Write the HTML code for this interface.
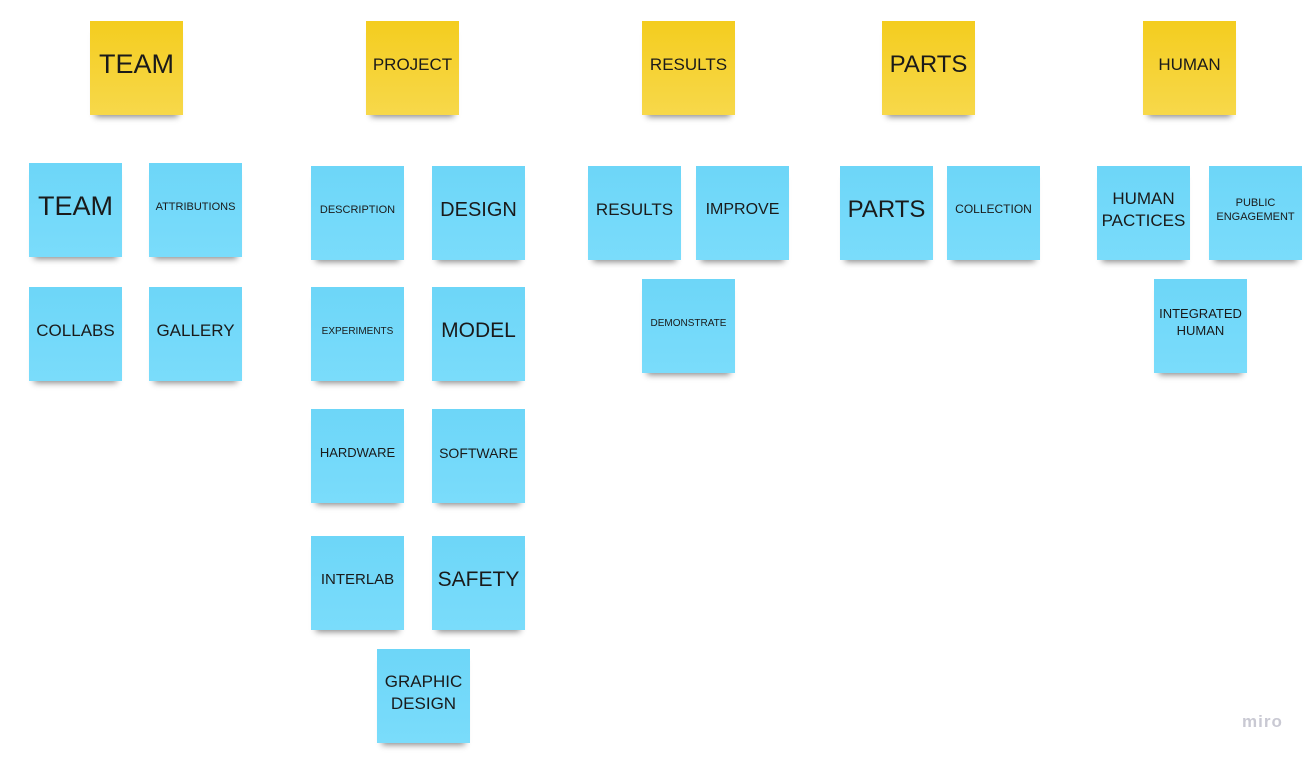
<!DOCTYPE html>
<html><head><meta charset="utf-8"><style>
html,body{margin:0;padding:0;width:1314px;height:760px;background:#fff;overflow:hidden;position:relative;font-family:"Liberation Sans",sans-serif;}
.n{position:absolute;width:93px;height:94px;display:flex;align-items:center;justify-content:center;text-align:center;color:#1a1a1a;line-height:1.3;box-sizing:border-box;padding:0 2px 6px 2px;box-shadow:0 7px 6px -5px rgba(0,0,0,0.45);}
.y{background:linear-gradient(180deg,#f4cd1f,#f7d84a);}
.b{background:linear-gradient(180deg,#6dd6f8,#7adcfb);}
.L{font-size:27px;}
.M{font-size:17px;}
.S{font-size:11px;}
.miro{position:absolute;left:1242px;top:712px;font-size:17px;color:#c9c9d3;letter-spacing:1px;font-weight:bold;}
</style></head><body>
<div class="n y L" style="left:90px;top:21px">TEAM</div>
<div class="n y M" style="left:366px;top:21px">PROJECT</div>
<div class="n y M" style="left:642px;top:21px">RESULTS</div>
<div class="n y" style="left:882px;top:21px;font-size:24px">PARTS</div>
<div class="n y M" style="left:1143px;top:21px">HUMAN</div>

<div class="n b L" style="left:29px;top:163px">TEAM</div>
<div class="n b S" style="left:149px;top:163px">ATTRIBUTIONS</div>
<div class="n b M" style="left:29px;top:287px">COLLABS</div>
<div class="n b M" style="left:149px;top:287px">GALLERY</div>

<div class="n b S" style="left:311px;top:166px">DESCRIPTION</div>
<div class="n b" style="left:432px;top:166px;font-size:20px">DESIGN</div>
<div class="n b S" style="left:311px;top:287px;font-size:10px">EXPERIMENTS</div>
<div class="n b" style="left:432px;top:287px;font-size:21px">MODEL</div>
<div class="n b" style="left:311px;top:409px;font-size:13px">HARDWARE</div>
<div class="n b" style="left:432px;top:409px;font-size:14px">SOFTWARE</div>
<div class="n b" style="left:311px;top:536px;font-size:15px">INTERLAB</div>
<div class="n b" style="left:432px;top:536px;font-size:21px">SAFETY</div>
<div class="n b M" style="left:377px;top:649px">GRAPHIC<br>DESIGN</div>

<div class="n b M" style="left:588px;top:166px">RESULTS</div>
<div class="n b" style="left:696px;top:166px;font-size:16px">IMPROVE</div>
<div class="n b S" style="left:642px;top:279px;font-size:10px">DEMONSTRATE</div>

<div class="n b" style="left:840px;top:166px;font-size:24px">PARTS</div>
<div class="n b S" style="left:947px;top:166px;font-size:12px">COLLECTION</div>

<div class="n b M" style="left:1097px;top:166px">HUMAN<br>PACTICES</div>
<div class="n b S" style="left:1209px;top:166px">PUBLIC<br>ENGAGEMENT</div>
<div class="n b" style="left:1154px;top:279px;font-size:13px">INTEGRATED<br>HUMAN</div>

<div class="miro">miro</div>
</body></html>
